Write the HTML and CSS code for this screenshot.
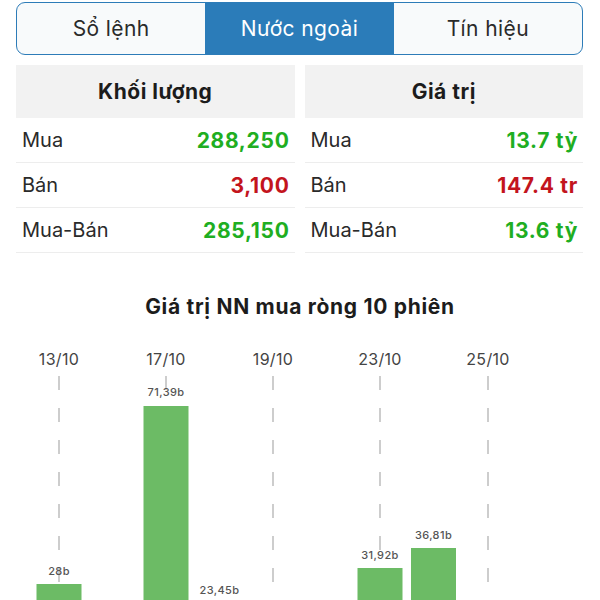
FILE: index.html
```html
<!DOCTYPE html>
<html lang="vi">
<head>
<meta charset="utf-8">
<link rel="stylesheet" href="styles.css">
</head>
<body>
<div class="seg">
  <div class="seg-item">Sổ lệnh</div>
  <div class="seg-item active">Nước ngoài</div>
  <div class="seg-item">Tín hiệu</div>
</div>

<div class="tables">
  <div class="col">
    <div class="th">Khối lượng</div>
    <div class="row"><span class="lbl">Mua</span><span class="val up">288,250</span></div>
    <div class="row"><span class="lbl">Bán</span><span class="val down">3,100</span></div>
    <div class="row"><span class="lbl">Mua-Bán</span><span class="val up">285,150</span></div>
  </div>
  <div class="col">
    <div class="th">Giá trị</div>
    <div class="row"><span class="lbl">Mua</span><span class="val up">13.7 tỷ</span></div>
    <div class="row"><span class="lbl">Bán</span><span class="val down">147.4 tr</span></div>
    <div class="row"><span class="lbl">Mua-Bán</span><span class="val up">13.6 tỷ</span></div>
  </div>
</div>

<div class="chart">
  <div class="chart-title">Giá trị NN mua ròng 10 phiên</div>
  <svg class="chart-svg" width="600" height="300" viewBox="0 0 600 300">
    <g class="dates">
      <text x="59" y="36">13/10</text>
      <text x="166" y="36">17/10</text>
      <text x="273" y="36">19/10</text>
      <text x="380" y="36">23/10</text>
      <text x="488" y="36">25/10</text>
    </g>
    <g class="grid">
      <line x1="59" y1="47" x2="59" y2="370"/>
      <line x1="166" y1="47" x2="166" y2="370"/>
      <line x1="273" y1="47" x2="273" y2="370"/>
      <line x1="380" y1="47" x2="380" y2="370"/>
      <line x1="488" y1="47" x2="488" y2="370"/>
    </g>
    <g class="bars">
      <rect x="36.5" y="255" width="45" height="115"/>
      <rect x="143.5" y="77" width="45" height="293"/>
      <rect x="197" y="274" width="45" height="96"/>
      <rect x="357.5" y="239" width="45" height="131"/>
      <rect x="411" y="219" width="45" height="151"/>
    </g>
    <g class="vals">
      <text x="59" y="246">28b</text>
      <text x="166" y="67">71,39b</text>
      <text x="219.5" y="265">23,45b</text>
      <text x="380" y="230">31,92b</text>
      <text x="433.5" y="210">36,81b</text>
    </g>
  </svg>
</div>
</body>
</html>
```

FILE: styles.css
```css
html, body {
  margin: 0;
  padding: 0;
  background: #ffffff;
}
body {
  font-family: "Inter", "Noto Sans", "DejaVu Sans", sans-serif;
  color: #222;
  overflow: hidden;
}
.seg {
  margin: 2px 17px 0 16px;
  height: 53px;
  box-sizing: border-box;
  border: 1.5px solid #2d7cb8;
  border-radius: 9px;
  overflow: hidden;
  display: grid;
  grid-template-columns: 1fr 1fr 1fr;
  background: #f8fafb;
}
.seg-item {
  display: flex;
  align-items: center;
  justify-content: center;
  font-size: 21px;
  letter-spacing: 0.4px;
  color: #2a2a2a;
}
.seg-item.active {
  background: #2b7cb9;
  color: #ffffff;
}
.tables {
  margin: 10px 17px 0 16px;
  display: grid;
  grid-template-columns: 1fr 1fr;
  column-gap: 10px;
}
.th {
  height: 53px;
  background: #f2f2f2;
  display: flex;
  align-items: center;
  justify-content: center;
  font-size: 21px;
  letter-spacing: 0.5px;
  font-weight: 700;
  color: #1c1c1c;
}
.row {
  height: 44px;
  border-bottom: 1px solid #ededed;
  display: flex;
  align-items: center;
  justify-content: space-between;
  padding: 0 5px 0 6px;
  font-size: 20px;
}
.lbl {
  color: #2a2a2a;
}
.val {
  font-weight: 700;
  font-size: 21px;
  letter-spacing: 0.7px;
}
.val.up {
  color: #1fae22;
}
.val.down {
  color: #c3141d;
}
.chart {
  margin-top: 42px;
}
.chart-title {
  text-align: center;
  font-size: 21px;
  line-height: 24px;
  letter-spacing: 0.7px;
  font-weight: 700;
  color: #1c1c1c;
}
.chart-svg {
  display: block;
  margin-top: 10px;
}
.dates text {
  font-family: "Inter", "Noto Sans", sans-serif;
  font-size: 16px;
  letter-spacing: 0.3px;
  fill: #444;
  text-anchor: middle;
}
.grid line {
  stroke: #bdbdbd;
  stroke-width: 1.5;
  stroke-dasharray: 14 18;
}
.bars rect {
  fill: #6cbb65;
}
.vals text {
  font-family: "Inter", "Noto Sans", sans-serif;
  font-size: 11px;
  font-weight: 500;
  letter-spacing: 0.4px;
  fill: #555;
  text-anchor: middle;
}
```
